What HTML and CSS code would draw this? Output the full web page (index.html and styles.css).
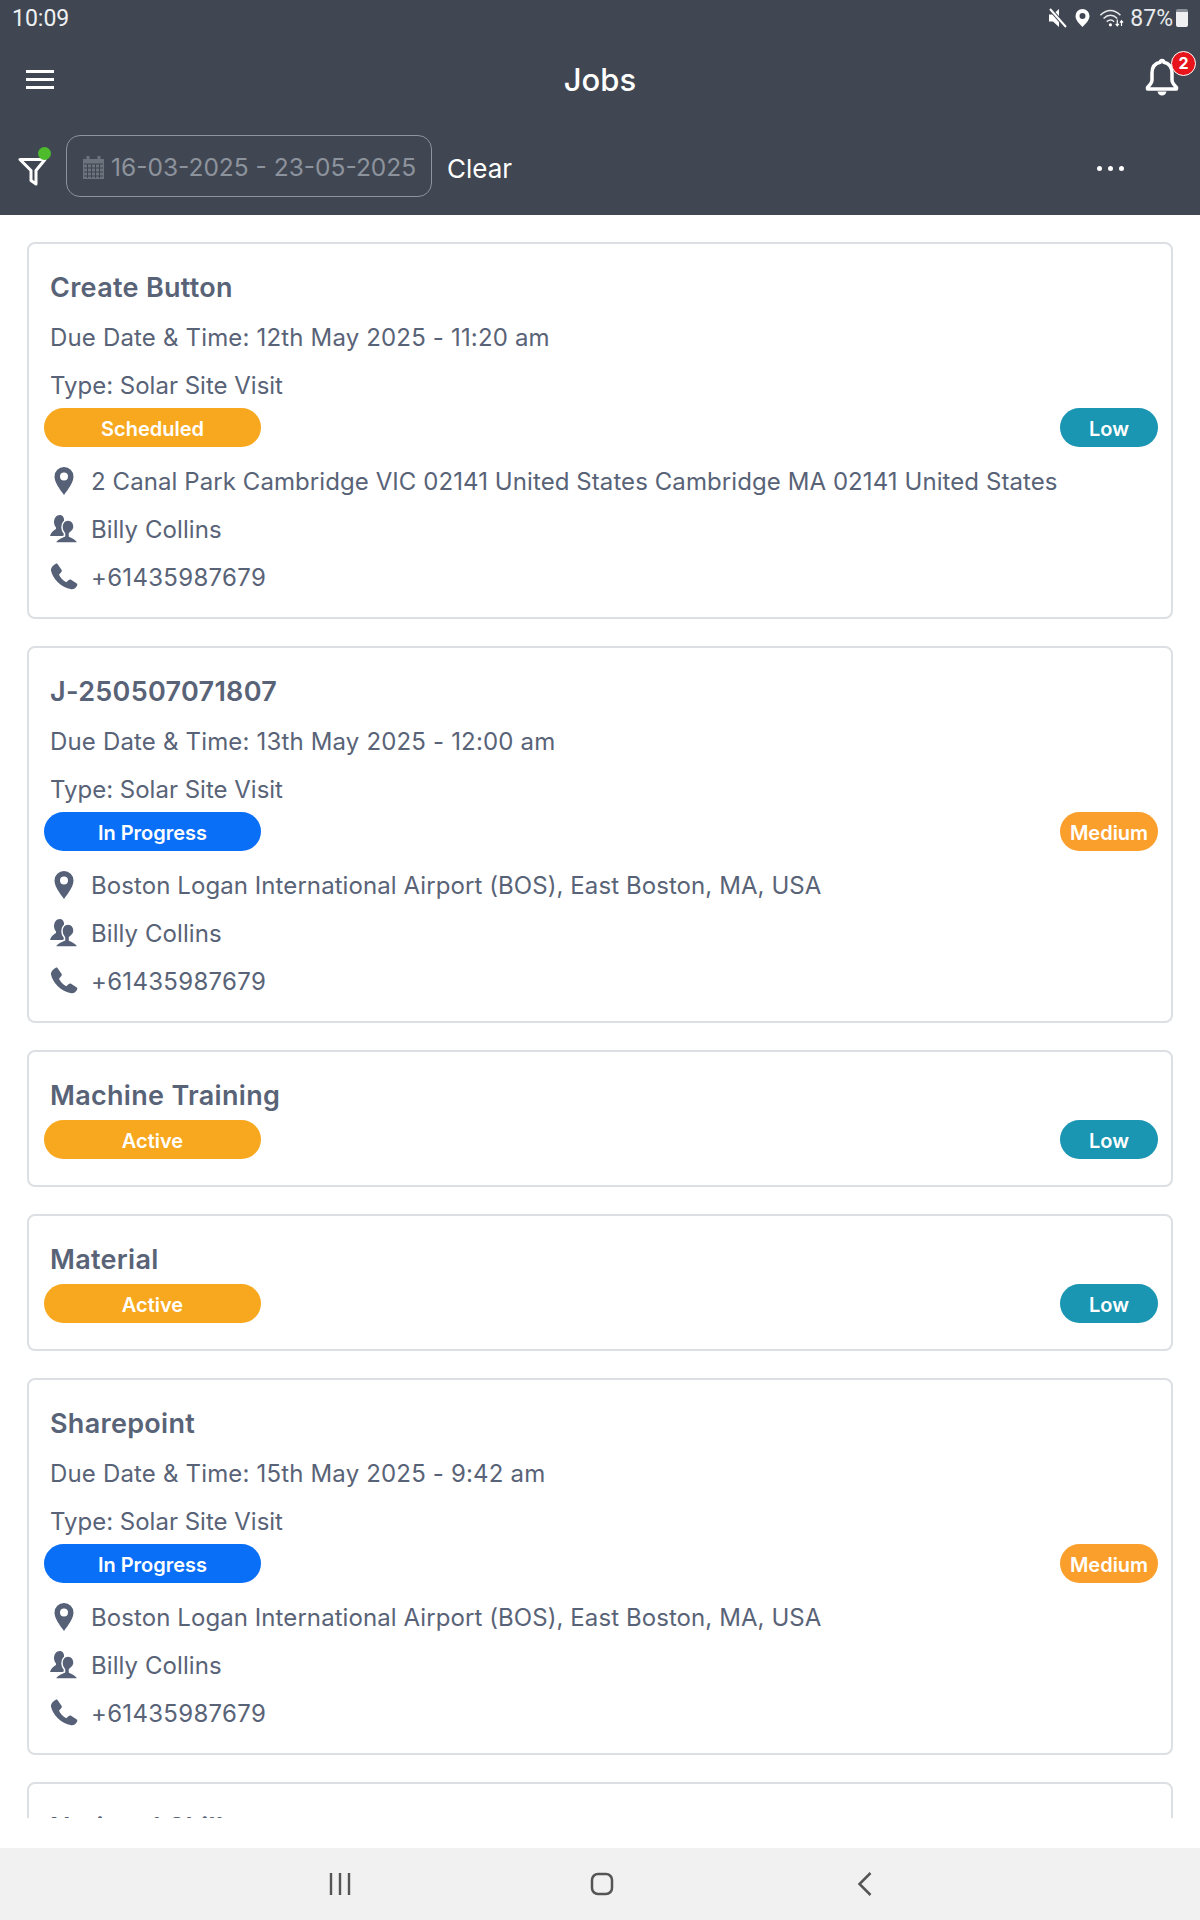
FILE: index.html
```html
<!DOCTYPE html>
<html lang="en">
<head>
    <meta charset="UTF-8">
    <meta name="viewport" content="width=device-width, initial-scale=1.0">
    <title>Jobs</title>
    <link rel="stylesheet" href="styles.css">
</head>
<body>
<svg class="defs" width="0" height="0">
    <symbol id="pin" viewBox="0 0 28 28"><path fill-rule="evenodd" d="M14 0a9.500 9.500 0 0 1 9.500 9.500C23.500 15.500 18 22.500 14 28 10 22.500 4.500 15.500 4.500 9.500A9.500 9.500 0 0 1 14 0zm0 5.500a4 4 0 1 0 0 8 4 4 0 0 0 0-8z"/></symbol>
    <symbol id="person" viewBox="0 0 28 28">
        <path d="M10 0C6 0 4 3.500 4 7c0 2.500 1 4.500 2 5.500V14c-2 1-5 3-6 7h14V4C13.500 1.500 12 0 10 0z"/>
        <path d="M18 5c-3.500 0-6 3-6 7.500 0 2.500 1 4.500 2.500 6V21C11 22.500 6.500 23.500 5 28h23c-1.500-4.500-6-5.500-8.500-7v-2.500c1.500-1.500 4.500-3.500 4.500-6 0-4.500-2.500-7.500-6-7.500z" stroke="#fff" stroke-width="1.500"/>
    </symbol>
    <symbol id="phone" viewBox="0 0 28 28"><path d="M7.500 1l4 5.800c.5.800.4 1.500-.2 2.200L9 11.800c1.500 3.200 4 5.800 7.200 7.500l2.600-2.400c.7-.6 1.500-.7 2.300-.2l5.700 3.800c.6.500.7 1.200.3 1.900-1 2.200-3.300 4.200-5.800 3.800C11 24.500 2.500 15.500 1 7.500.6 5 3 2.200 5.500.9c.7-.4 1.500-.4 2 .1z"/></symbol>
</svg>
<div class="app">
    <header class="top">
        <div class="status">
            <span class="time">10:09</span>
            <div class="status-icons">
                <svg class="mute" width="20" height="20" viewBox="0 0 20 20"><path d="M1 6.500h4L11 1v18l-6-5.500H1z" fill="#fff"/><path d="M2 1l16 18" stroke="#404753" stroke-width="4"/><path d="M2 1l16 18" stroke="#fff" stroke-width="2"/></svg>
                <svg width="15" height="18" viewBox="0 0 15 18"><path fill-rule="evenodd" d="M7.500 0a7 7 0 0 1 7 7c0 4-4 8-7 11-3-3-7-7-7-11a7 7 0 0 1 7-7zm0 4a3 3 0 1 0 0 6 3 3 0 0 0 0-6z" fill="#fff"/></svg>
                <svg width="26" height="19" viewBox="0 0 24 18"><g fill="none" stroke="#e8eaec" stroke-width="1.400"><path d="M1 6c6-6 13-6 19 0"/><path d="M4 9c4-4 9-4 13 0"/><path d="M7 12c2.500-2 5-2 7 0"/></g><circle cx="10.500" cy="15" r="1.500" fill="#fff"/><path d="M17 10v6M15.500 14l1.500 2 1.500-2M21 16v-5M19.500 13l1.500-2 1.500 2" fill="none" stroke="#fff" stroke-width="1.100"/></svg>
                <span class="pct">87%</span>
                <div class="battery"></div>
            </div>
        </div>
        <div class="title-row">
            <div class="menu"><span></span><span></span><span></span></div>
            <h1>Jobs</h1>
            <div class="bell">
                <svg width="34" height="40" viewBox="0 0 34 40"><path d="M17 3.500c-1 0-1.800.8-1.800 1.800C9.500 6.500 7 11 7 16v7c0 3-2 5-4.500 7.500V32h29v-1.500C29 28 27 26 27 23v-7c0-5-2.500-9.500-8.200-10.700 0-1-.8-1.800-1.800-1.800z" fill="none" stroke="#fff" stroke-width="3.500" stroke-linejoin="round"/><path d="M12.500 34.500h9c-.5 2.500-2.300 4-4.500 4s-4-1.500-4.500-4z" fill="#fff"/></svg>
                <span class="badge">2</span>
            </div>
        </div>
        <div class="filter-row">
            <div class="filter">
                <svg width="32" height="36" viewBox="0 0 32 36"><path d="M2 9.500h25L18 20.500V34l-5-3.500v-10z" fill="none" stroke="#fff" stroke-width="3" stroke-linejoin="round"/></svg>
                <span class="dot"></span>
            </div>
            <div class="date-box">
                <svg width="23" height="25" viewBox="0 0 23 25"><path d="M1 4h21v20H1z" fill="#6d737c"/><path d="M6 1v5M17 1v5" stroke="#6d737c" stroke-width="3"/><path d="M2 9h19M2 13h19M2 17h19M2 21h19M5.500 9v14M9.500 9v14M13.500 9v14M17.500 9v14" stroke="#404753" stroke-width="1"/></svg>
                <span>16-03-2025 - 23-05-2025</span>
            </div>
            <span class="clear">Clear</span>
            <div class="more"><span></span><span></span><span></span></div>
        </div>
    </header>

    <main class="list">
        <article class="card">
            <h2>Create Button</h2>
            <p class="line due">Due Date &amp; Time: 12th May 2025 - 11:20 am</p>
            <p class="line type">Type: Solar Site Visit</p>
            <div class="pills"><span class="pill status-pill amber">Scheduled</span><span class="pill prio teal">Low</span></div>
            <div class="info"><svg class="ic" width="28" height="28"><use href="#pin"/></svg><span>2 Canal Park Cambridge VIC 02141 United States Cambridge MA 02141 United States</span></div>
            <div class="info"><svg class="ic" width="28" height="28"><use href="#person"/></svg><span>Billy Collins</span></div>
            <div class="info phone"><svg class="ic" width="28" height="28"><use href="#phone"/></svg><span>+61435987679</span></div>
        </article>

        <article class="card">
            <h2>J-250507071807</h2>
            <p class="line due">Due Date &amp; Time: 13th May 2025 - 12:00 am</p>
            <p class="line type">Type: Solar Site Visit</p>
            <div class="pills"><span class="pill status-pill blue">In Progress</span><span class="pill prio orange">Medium</span></div>
            <div class="info"><svg class="ic" width="28" height="28"><use href="#pin"/></svg><span>Boston Logan International Airport (BOS), East Boston, MA, USA</span></div>
            <div class="info"><svg class="ic" width="28" height="28"><use href="#person"/></svg><span>Billy Collins</span></div>
            <div class="info phone"><svg class="ic" width="28" height="28"><use href="#phone"/></svg><span>+61435987679</span></div>
        </article>

        <article class="card short">
            <h2>Machine Training</h2>
            <div class="pills"><span class="pill status-pill amber">Active</span><span class="pill prio teal">Low</span></div>
        </article>

        <article class="card short">
            <h2>Material</h2>
            <div class="pills"><span class="pill status-pill amber">Active</span><span class="pill prio teal">Low</span></div>
        </article>

        <article class="card">
            <h2>Sharepoint</h2>
            <p class="line due">Due Date &amp; Time: 15th May 2025 - 9:42 am</p>
            <p class="line type">Type: Solar Site Visit</p>
            <div class="pills"><span class="pill status-pill blue">In Progress</span><span class="pill prio orange">Medium</span></div>
            <div class="info"><svg class="ic" width="28" height="28"><use href="#pin"/></svg><span>Boston Logan International Airport (BOS), East Boston, MA, USA</span></div>
            <div class="info"><svg class="ic" width="28" height="28"><use href="#person"/></svg><span>Billy Collins</span></div>
            <div class="info phone"><svg class="ic" width="28" height="28"><use href="#phone"/></svg><span>+61435987679</span></div>
        </article>

        <article class="card short">
            <h2>National Skills</h2>
        </article>
    </main>

    <nav class="navbar">
        <svg width="24" height="24" viewBox="0 0 24 24"><path d="M3 1v22M12 1v22M21 1v22" stroke="#555" stroke-width="2.400" fill="none"/></svg>
        <svg width="24" height="24" viewBox="0 0 24 24"><rect x="2" y="2" width="20" height="20" rx="6" stroke="#555" stroke-width="2.500" fill="none"/></svg>
        <svg width="24" height="24" viewBox="0 0 24 24"><path d="M18.500 1l-11 11 11 11" stroke="#555" stroke-width="2.500" fill="none"/></svg>
    </nav>
</div>
</body>
</html>
```

FILE: styles.css
```css
* {
    box-sizing: border-box;
}
html, body {
    margin: 0;
    padding: 0;
    background: #fff;
}
body {
    font-family: Inter, "Liberation Sans", sans-serif;
}
.defs {
    display: block;
    height: 0;
}
.app {
    width: 1200px;
    height: 1920px;
    display: flex;
    flex-direction: column;
    overflow: hidden;
}

/* header */
.top {
    height: 215px;
    background-color: #404753;
    color: #fff;
    flex-shrink: 0;
}
.status {
    height: 36px;
    display: flex;
    align-items: center;
    justify-content: space-between;
    padding: 0 12px;
}
.time {
    font-family: Roboto, sans-serif;
    font-size: 23px;
    color: #eef0f2;
}
.status-icons {
    display: flex;
    align-items: center;
    gap: 9px;
}
.mute {
    margin-right: -2px;
}
.pct {
    font-family: Roboto, sans-serif;
    font-size: 23px;
    color: #e8eaec;
    margin-left: -4px;
    margin-right: -6px;
}
.battery {
    width: 12px;
    height: 18px;
    background: #eef0f2;
    border-top: 3px solid #8b9098;
    border-radius: 2px;
}
.title-row {
    height: 86px;
    display: flex;
    align-items: center;
    justify-content: space-between;
    padding: 0 21px 0 26px;
    position: relative;
}
.title-row h1 {
    margin: 0;
    font-size: 31px;
    font-weight: 500;
    position: absolute;
    left: 0;
    right: 0;
    text-align: center;
}
.menu {
    width: 28px;
    display: flex;
    flex-direction: column;
    gap: 5px;
}
.menu span {
    height: 3px;
    background: #fff;
}
.bell {
    position: relative;
    width: 34px;
    height: 40px;
    margin-top: -4px;
}
.badge {
    position: absolute;
    top: -6px;
    right: -17px;
    width: 25px;
    height: 25px;
    border-radius: 50%;
    background: #e8141c;
    border: 1.5px solid #fff;
    font-size: 16px;
    font-weight: 700;
    text-align: center;
    line-height: 22px;
}
.filter-row {
    display: flex;
    align-items: center;
    height: 62px;
    margin-top: 13px;
    padding-left: 18px;
}
.filter {
    position: relative;
    width: 32px;
    height: 36px;
    margin-top: 4px;
}
.dot {
    position: absolute;
    top: -3px;
    left: 20px;
    width: 13px;
    height: 13px;
    border-radius: 50%;
    background: #4dbb2c;
}
.date-box {
    width: 366px;
    height: 62px;
    margin-left: 16px;
    border: 1px solid #8e949c;
    border-radius: 14px;
    display: flex;
    align-items: center;
    gap: 6px;
    padding: 2px 0 0 15px;
    color: #8d939c;
    font-size: 24.500px;
}
.clear {
    margin-left: 15px;
    font-size: 26px;
    margin-top: 5px;
}
.more {
    margin-left: 585px;
    margin-top: 5px;
    display: flex;
    gap: 6px;
}
.more span {
    width: 5px;
    height: 5px;
    border-radius: 50%;
    background: #fff;
}

/* cards */
.list {
    height: 1603px;
    flex-shrink: 0;
    overflow: hidden;
    padding: 27px 27px 0 27px;
}
.card {
    border: 2px solid #dcdfe3;
    border-radius: 8px;
    height: 377px;
    margin-bottom: 27px;
    padding: 0 13px 0 21px;
    color: #596377;
}
.card.short {
    height: 137px;
}
.card h2 {
    margin: 0;
    font-size: 27px;
    font-weight: 600;
    letter-spacing: .3px;
    line-height: 32px;
    padding-top: 28px;
    height: 60px;
}
.line {
    margin: 0;
    font-size: 24px;
    line-height: 48px;
    height: 48px;
}
.due {
    margin-top: 10px;
    letter-spacing: .17px;
}
.pills {
    display: flex;
    justify-content: space-between;
    height: 39px;
    margin: 8px 0 0 -6px;
}
.due + .type + .pills {
    margin-top: -2px;
}
.pill {
    height: 39px;
    border-radius: 20px;
    color: #fff;
    font-size: 20px;
    font-weight: 600;
    padding-top: 2px;
    display: flex;
    align-items: center;
    justify-content: center;
}
.status-pill {
    width: 217px;
}
.prio {
    width: 98px;
}
.amber { background: #f8a81f; }
.blue { background: #0a6ff7; }
.teal { background: #1a96b2; }
.orange { background: #fb9f2c; }
.info {
    display: flex;
    align-items: center;
    height: 48px;
    gap: 13px;
    font-size: 24px;
    letter-spacing: .08px;
}
.info.phone {
    letter-spacing: .3px;
}
.pills + .info {
    margin-top: 10px;
}
.ic {
    fill: #566178;
    flex-shrink: 0;
}

/* android bar */
.navbar {
    margin-top: 30px;
    height: 72px;
    background: #f1f1f1;
    display: flex;
    align-items: center;
    flex-shrink: 0;
    padding-left: 328px;
    gap: 238px;
}
```
